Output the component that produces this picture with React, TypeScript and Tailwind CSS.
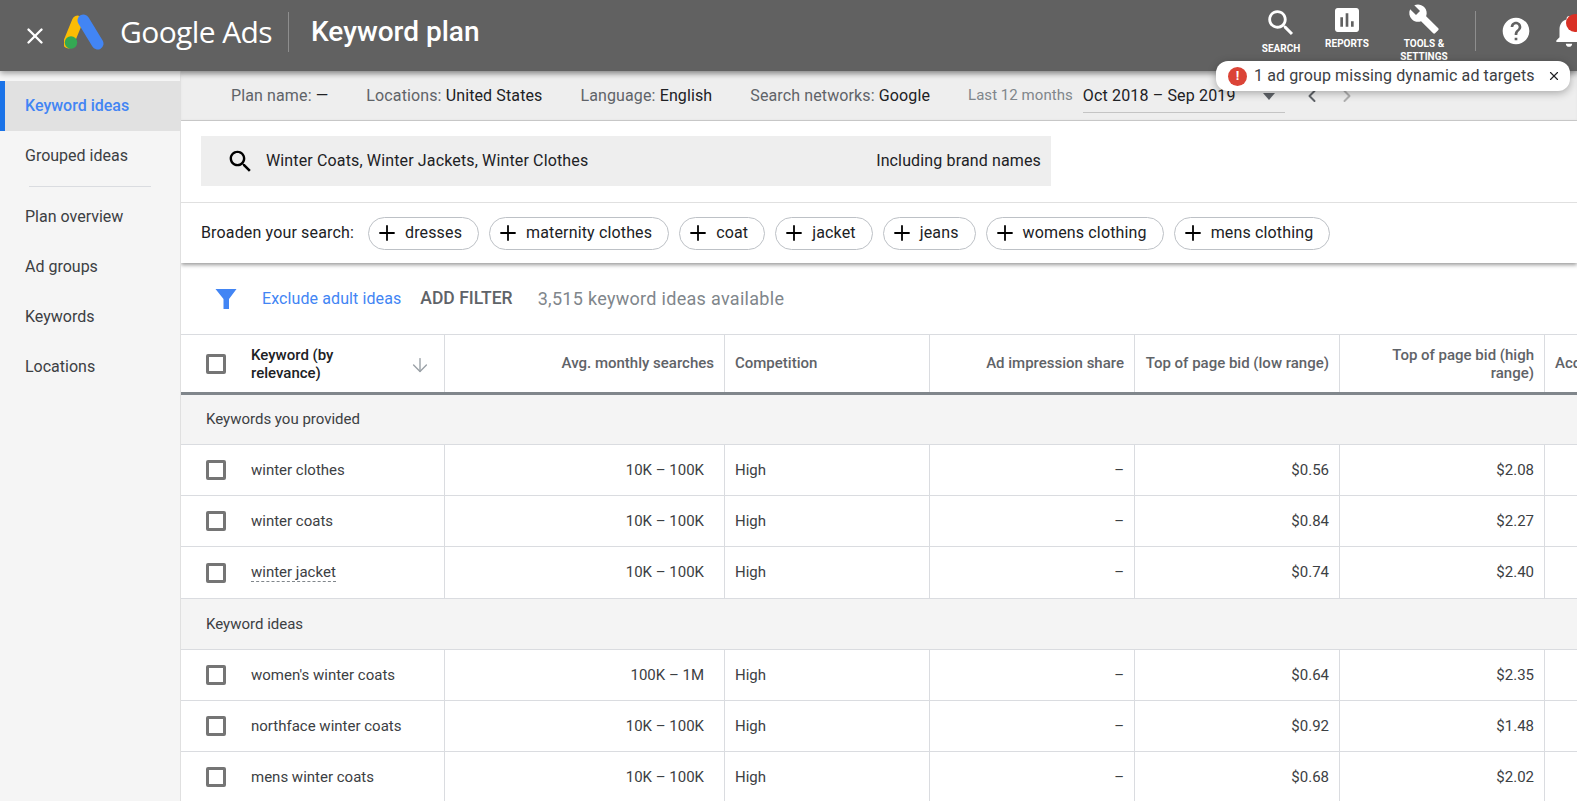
import React from "react";
import { X, ArrowDown, Plus, ChevronLeft, ChevronRight } from "lucide-react";

const cols = "grid grid-cols-[264px_280px_205px_205px_205px_205px_1fr]";
const searchPath = "M15.5 14h-.79l-.28-.27C15.41 12.59 16 11.11 16 9.5 16 5.91 13.09 3 9.5 3S3 5.91 3 9.5 5.91 16 9.5 16c1.61 0 3.09-.59 4.23-1.57l.27.28v.79l5 4.99L20.49 19l-4.99-5zm-6 0C7.01 14 5 11.99 5 9.5S7.01 5 9.5 5 14 7.01 14 9.5 11.99 14 9.5 14z";

function Glyph({ d, size, className }: { d: string; size: number; className?: string }) {
  return (
    <svg width={size} height={size} viewBox="0 0 24 24" fill="currentColor" className={className}>
      <path d={d} />
    </svg>
  );
}

function Check() {
  return <span className="block w-[20px] h-[20px] rounded-[2px] border-[3px] border-[#757575] bg-white shrink-0" />;
}

function Row({ k, s, low, high, dashed, tall }: { k: string; s: string; low: string; high: string; dashed?: boolean; tall?: boolean }) {
  const cell = "h-full flex items-center border-r border-[#dadce0] pr-[10px]";
  return (
    <div className={`${cols} ${tall ? "h-[52px]" : "h-[51px]"} border-b border-[#dadce0] text-[15px] text-[#3c4043]`}>
      <div className={`${cell} pl-[25px] pr-0 gap-[25px]`}>
        <Check />
        <span className={dashed ? "border-b border-dashed border-[#80868b] leading-[18px]" : ""}>{k}</span>
      </div>
      <div className={`${cell} justify-end pr-[20px]`}>{s}</div>
      <div className={`${cell} pl-[10px]`}>High</div>
      <div className={`${cell} justify-end`}>–</div>
      <div className={`${cell} justify-end`}>{low}</div>
      <div className={`${cell} justify-end`}>{high}</div>
      <div />
    </div>
  );
}

function Group({ t, tall }: { t: string; tall?: boolean }) {
  return (
    <div className={`${tall ? "h-[51px]" : "h-[50px]"} bg-[#f4f4f4] border-b border-[#dadce0] flex items-center pl-[25px] text-[15px] text-[#3c4043]`}>{t}</div>
  );
}

function Chip({ t }: { t: string }) {
  return (
    <span className="h-[33px] rounded-full border border-[#bdc1c6] flex items-center pl-[6px] pr-[16px] gap-[6px] text-[16px] text-[#202124] tracking-[0.15px]">
      <Plus size={24} strokeWidth={1.8} className="text-black" />
      {t}
    </span>
  );
}

function Meta({ a, b }: { a: string; b: string }) {
  return (
    <span className="text-[16px] tracking-[0.12px] text-[#5f6368] whitespace-nowrap">
      {a} <span className="text-[#202124]">{b}</span>
    </span>
  );
}

function Nav({ t }: { t: string }) {
  return <div className="h-[50px] flex items-center pl-[25px] text-[16px] text-[#3c4043]">{t}</div>;
}

function Tool({ label, w, children }: { label: React.ReactNode; w: string; children: React.ReactNode }) {
  return (
    <div className={`${w} flex flex-col items-center text-white text-[10px] font-bold text-center leading-[13px]`}>
      {children}
      <span>{label}</span>
    </div>
  );
}

export default function App() {
  return (
    <div className="h-screen w-full overflow-hidden relative bg-white font-['Roboto',sans-serif]">
      <header className="relative z-20 h-[71px] bg-[#616161] shadow-[0_2px_6px_rgba(0,0,0,0.4)] flex items-center text-white">
        <div className="flex items-center pb-[8px] pl-[22px]">
          <X size={26} strokeWidth={2.2} className="mt-[8px]" />
          <svg width="40" height="36" viewBox="0 0 40 36" className="ml-[16px]">
            <path d="M13.5 7 L4.5 29" stroke="#fbbc04" strokeWidth="11" strokeLinecap="round" />
            <path d="M19.5 6.5 L33.5 29.5" stroke="#4285f4" strokeWidth="12" strokeLinecap="round" />
            <circle cx="7" cy="28.5" r="6.2" fill="#34a853" />
          </svg>
          <span className="ml-[16px] text-[30px] tracking-[-0.6px] font-['Open_Sans',sans-serif] font-normal leading-none whitespace-nowrap">Google Ads</span>
          <span className="ml-[16px] w-px h-[40px] bg-[#8e8e8e]" />
          <span className="ml-[22px] text-[28px] font-medium whitespace-nowrap">Keyword plan</span>
        </div>
        <div className="ml-auto flex items-start h-full pt-[7px] shrink-0">
          <Tool w="w-[60px]" label="SEARCH">
            <Glyph d={searchPath} size={34} className="mb-[2px] -mt-[1px]" />
          </Tool>
          <Tool w="w-[70px] ml-[1px]" label="REPORTS">
            <Glyph d="M19 3H5c-1.100 0-2 .9-2 2v14c0 1.100.9 2 2 2h14c1.100 0 2-.9 2-2V5c0-1.100-.9-2-2-2zM9 17H7v-7h2v7zm4 0h-2V7h2v10zm4 0h-2v-4h2v4z" size={32} className="mb-[1px] -mt-[3px]" />
          </Tool>
          <Tool w="w-[70px] ml-[7px]" label={<>TOOLS &amp;<br />SETTINGS</>}>
            <Glyph d="M22.7 19l-9.1-9.1c.9-2.3.4-5-1.500-6.900-2-2-5-2.400-7.400-1.300L9 6 6 9 1.600 4.700C.4 7.100.9 10.100 2.900 12.100c1.900 1.900 4.600 2.400 6.900 1.500l9.100 9.100c.4.400 1 .4 1.400 0l2.300-2.300c.5-.4.5-1.100.1-1.400z" size={32} className="-mt-[4px] mb-[2px]" />
          </Tool>
          <span className="ml-[16px] mt-[4px] w-px h-[40px] bg-[#8e8e8e]" />
          <Glyph d="M12 2C6.480 2 2 6.480 2 12s4.480 10 10 10 10-4.480 10-10S17.520 2 12 2zm1 17h-2v-2h2v2zm2.070-7.750l-.9.920C13.450 12.900 13 13.500 13 15h-2v-.5c0-1.100.450-2.100 1.170-2.830l1.240-1.260c.37-.360.59-.860.59-1.410 0-1.100-.9-2-2-2s-2 .9-2 2H8c0-2.210 1.790-4 4-4s4 1.790 4 4c0 .88-.36 1.680-.93 2.250z" size={32} className="ml-[24px] mt-[8px] text-white" />
          <div className="ml-[18px] w-[27px] mt-[5px] overflow-hidden relative h-[40px] shrink-0">
            <Glyph d="M12 22c1.100 0 2-.9 2-2h-4c0 1.100.89 2 2 2zm6-6v-5c0-3.070-1.640-5.640-4.500-6.320V4c0-.83-.67-1.500-1.500-1.500s-1.500.67-1.500 1.500v.68C7.630 5.360 6 7.920 6 11v5l-2 2v1h16v-1l-2-2z" size={38} />
            <span className="absolute top-[2px] left-[16px] w-[18px] h-[18px] rounded-full bg-[#d93025]" />
          </div>
        </div>
      </header>

      <div className="absolute z-30 left-[1216px] top-[61px] w-[354px] h-[30px] bg-white rounded-[12px] shadow-[0_2px_8px_rgba(0,0,0,0.3)] flex items-center pl-[12px] text-[16px] text-[#3c4043] tracking-[0.12px]">
        <span className="w-[19px] h-[19px] rounded-full bg-[#db4437] text-white text-[13px] font-bold flex items-center justify-center mr-[7px]">!</span>
        <span className="whitespace-nowrap">1 ad group missing dynamic ad targets</span>
        <X size={14} strokeWidth={2} className="ml-[12px] text-[#202124]" />
      </div>

      <div className="flex h-[730px]">
        <aside className="w-[181px] shrink-0 bg-[#f5f5f5] border-r border-[#e0e0e0] pt-[10px] h-full">
          <div className="h-[50px] bg-[#e1e1e1] border-l-[5px] border-[#1a73e8] flex items-center pl-[20px] text-[16px] font-medium text-[#4285f4]">Keyword ideas</div>
          <Nav t="Grouped ideas" />
          <div className="mx-[29px] border-t border-[#dadce0] my-[5px]" />
          <Nav t="Plan overview" />
          <Nav t="Ad groups" />
          <Nav t="Keywords" />
          <Nav t="Locations" />
        </aside>

        <main className="flex-1 min-w-0 overflow-hidden">
          <div className="h-[50px] bg-[#eeeeee] border-b border-[#d0d0d0] flex items-center pl-[50px] shadow-[inset_0_6px_6px_-4px_rgba(0,0,0,0.15)] whitespace-nowrap">
            <Meta a="Plan name:" b="—" />
            <span className="w-[38px]" />
            <Meta a="Locations:" b="United States" />
            <span className="w-[38px]" />
            <Meta a="Language:" b="English" />
            <span className="w-[38px]" />
            <Meta a="Search networks:" b="Google" />
            <span className="w-[38px]" />
            <span className="text-[15px] text-[#80868b] tracking-[0.05px]">Last 12 months</span>
            <div className="ml-[10px] w-[202px] h-[32px] mt-[2px] border-b border-[#c4c4c4] flex items-center justify-between pr-[10px] text-[16px] text-[#202124] tracking-[0.15px]">
              <span>Oct 2018 – Sep 2019</span>
              <span className="w-0 h-0 border-x-[6px] border-x-transparent border-t-[7px] border-t-[#5f6368]" />
            </div>
            <ChevronLeft size={20} strokeWidth={2.4} className="ml-[17px] text-[#5f6368]" />
            <ChevronRight size={20} strokeWidth={2.4} className="ml-[15px] text-[#b0b0b0]" />
          </div>

          <div className="relative z-10 bg-white shadow-[0_2px_4px_rgba(0,0,0,0.4)]">
            <div className="h-[81px] flex items-start pt-[15px] pl-[20px]">
              <div className="w-[850px] h-[50px] bg-[#eeeeee] flex items-center pl-[25px] pr-[10px] text-[16px] tracking-[0.14px] text-[#202124]">
                <Glyph d={searchPath} size={29} className="text-black mr-[11px]" />
                <span>Winter Coats, Winter Jackets, Winter Clothes</span>
                <span className="ml-auto">Including brand names</span>
              </div>
            </div>
            <div className="h-[61px] border-t border-[#e0e0e0] flex items-center pl-[20px] gap-[10px] text-[16px] tracking-[0.15px] text-[#202124] whitespace-nowrap">
              <span className="mr-[4px]">Broaden your search:</span>
              <Chip t="dresses" />
              <Chip t="maternity clothes" />
              <Chip t="coat" />
              <Chip t="jacket" />
              <Chip t="jeans" />
              <Chip t="womens clothing" />
              <Chip t="mens clothing" />
            </div>
          </div>

          <div className="h-[71px] flex items-center pl-[34px] whitespace-nowrap">
            <svg width="22" height="20" viewBox="0 0 22 20"><path d="M0.500 0h21L14 10v10H8.500V10z" fill="#4285f4" /></svg>
            <span className="ml-[25px] text-[16px] tracking-[0.1px] text-[#4285f4]">Exclude adult ideas</span>
            <span className="ml-[19px] text-[17.500px] font-medium text-[#5f6368]">ADD FILTER</span>
            <span className="ml-[25px] text-[18px] tracking-[0.3px] text-[#80868b]">3,515 keyword ideas available</span>
          </div>

          <div className={`${cols} h-[61px] border-t border-[#dadce0] border-b-[3px] border-b-[#80868b] text-[15px] font-medium text-[#5f6368]`}>
            <div className="border-r border-[#dadce0] flex items-center pl-[25px] pr-[13px]">
              <Check />
              <span className="ml-[25px] w-[110px] leading-[18px] text-[#202124]">Keyword (by relevance)</span>
              <ArrowDown size={22} strokeWidth={1.500} className="ml-auto text-[#9aa0a6] mt-[2px]" />
            </div>
            <div className="border-r border-[#dadce0] flex items-center justify-end pr-[10px]">Avg. monthly searches</div>
            <div className="border-r border-[#dadce0] flex items-center pl-[10px]">Competition</div>
            <div className="border-r border-[#dadce0] flex items-center justify-end pr-[10px]">Ad impression share</div>
            <div className="border-r border-[#dadce0] flex items-center justify-end pr-[10px] whitespace-nowrap">Top of page bid (low range)</div>
            <div className="border-r border-[#dadce0] flex items-center justify-end pr-[10px] text-right leading-[18px] pl-[40px]">Top of page bid (high range)</div>
            <div className="flex items-center pl-[10px] whitespace-nowrap overflow-hidden">Account status</div>
          </div>

          <Group t="Keywords you provided" />
          <Row k="winter clothes" s="10K – 100K" low="$0.56" high="$2.08" />
          <Row k="winter coats" s="10K – 100K" low="$0.84" high="$2.27" />
          <Row k="winter jacket" s="10K – 100K" low="$0.74" high="$2.40" dashed tall />
          <Group t="Keyword ideas" tall />
          <Row k="women's winter coats" s="100K – 1M" low="$0.64" high="$2.35" />
          <Row k="northface winter coats" s="10K – 100K" low="$0.92" high="$1.48" />
          <Row k="mens winter coats" s="10K – 100K" low="$0.68" high="$2.02" />
        </main>
      </div>
    </div>
  );
}
